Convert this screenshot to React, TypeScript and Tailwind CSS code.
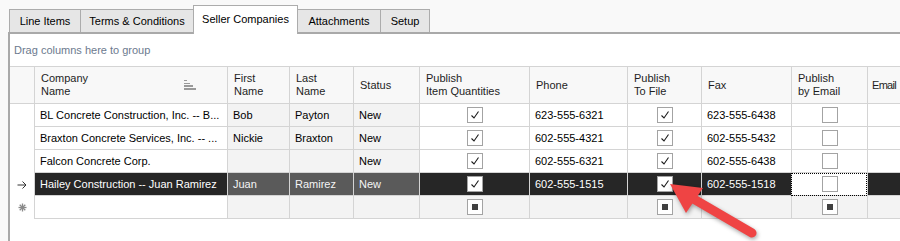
import type { ReactNode } from "react";

type Row = {
  company: string;
  first: string;
  last: string;
  status: string;
  piq: boolean;
  phone: string;
  ptf: boolean;
  fax: string;
  pbe: boolean;
};

// company names are shown as the grid clips them
const rows: Row[] = [
  {
    company: "BL Concrete Construction, Inc. -- B...",
    first: "Bob",
    last: "Payton",
    status: "New",
    piq: true,
    phone: "623-555-6321",
    ptf: true,
    fax: "623-555-6438",
    pbe: false,
  },
  {
    company: "Braxton Concrete Services, Inc. -- ...",
    first: "Nickie",
    last: "Braxton",
    status: "New",
    piq: true,
    phone: "602-555-4321",
    ptf: true,
    fax: "602-555-5432",
    pbe: false,
  },
  {
    company: "Falcon Concrete Corp.",
    first: "",
    last: "",
    status: "New",
    piq: true,
    phone: "602-555-6321",
    ptf: true,
    fax: "602-555-6438",
    pbe: false,
  },
  {
    company: "Hailey Construction -- Juan Ramirez",
    first: "Juan",
    last: "Ramirez",
    status: "New",
    piq: true,
    phone: "602-555-1515",
    ptf: true,
    fax: "602-555-1518",
    pbe: false,
  },
];

const tabs = [
  { label: "Line Items", w: "w-[72px]" },
  { label: "Terms & Conditions", w: "w-[114px]" },
  { label: "Seller Companies", w: "w-[105px]" },
  { label: "Attachments", w: "w-[84px]" },
  { label: "Setup", w: "w-[50px]" },
];

function CheckBox({ state }: { state: "on" | "off" | "mixed" }) {
  return (
    <div className="flex h-[16px] w-[16px] items-center justify-center border border-[#a3a3a3] bg-white">
      {state === "on" && (
        <svg width="14" height="14" viewBox="0 0 14 14">
          <polyline points="3.5,7.5 6,10 10.5,3.5" fill="none" stroke="#1a1a1a" strokeWidth="1.1" />
        </svg>
      )}
      {state === "mixed" && <div className="h-[6px] w-[6px] bg-[#404040]" />}
    </div>
  );
}

function Cell({
  className,
  children,
}: {
  className: string;
  children?: ReactNode;
}) {
  return (
    <div className={`flex h-[23px] min-w-0 shrink-0 items-center overflow-hidden border-b border-l border-[#d4d4d4] ${className}`}>
      {children}
    </div>
  );
}

function SortIcon() {
  return (
    <svg width="13" height="11" viewBox="0 0 13 11" className="shrink-0">
      <rect x="0" y="0" width="3" height="1" fill="#9a9a9a" />
      <rect x="0" y="3" width="6" height="1" fill="#9a9a9a" />
      <rect x="0" y="5" width="9" height="2" fill="#9a9a9a" />
      <rect x="0" y="8" width="12" height="2" fill="#9a9a9a" />
    </svg>
  );
}

function HeaderCell({ className, lines, icon }: { className: string; lines: string[]; icon?: boolean }) {
  return (
    <div className={`flex h-[37px] shrink-0 items-center justify-between overflow-hidden border-b border-l border-[#d4d4d4] bg-[#f8f8f8] leading-[13px] text-[#1e1e1e] ${className}`}>
      <div>
        {lines.map((l) => (
          <div key={l} className="whitespace-nowrap">
            {l}
          </div>
        ))}
      </div>
      {icon && <SortIcon />}
    </div>
  );
}

export default function App() {
  return (
    <div className="relative h-[241px] w-[900px] overflow-hidden bg-[#f9f9f9] text-[11px] text-black [font-family:'Liberation_Sans',Arial,sans-serif]">
      {/* tab strip */}
      <div className="flex h-[32px] items-end pl-[9px]">
        {tabs.map((t, i) => {
          const active = t.label === "Seller Companies";
          return (
            <div
              key={t.label}
              className={
                active
                  ? `relative z-10 -mb-[2px] -ml-px flex h-[29px] items-center justify-center border border-b-0 border-[#acacac] bg-white pb-[2px] ${t.w}`
                  : `flex h-[23px] items-center justify-center border border-b-0 border-[#acacac] bg-[#e6e6e6] ${i === 0 ? "" : "-ml-px"} ${t.w}`
              }
            >
              {t.label}
            </div>
          );
        })}
      </div>

      {/* content panel */}
      <div className="ml-[8px] h-[209px] border-l-2 border-t-2 border-[#a9a9a9] bg-white">
        <div className="flex h-[32px] items-center pl-[4px] text-[#6c7a8e]">Drag columns here to group</div>

        <div className="border-t border-[#d4d4d4]">
          {/* header */}
          <div className="flex">
            <div className="h-[37px] w-[24px] shrink-0 border-b border-[#d4d4d4] bg-[#f8f8f8]" />
            <HeaderCell className="w-[193px] pl-[6px] pr-[30px]" lines={["Company", "Name"]} icon />
            <HeaderCell className="w-[62px] pl-[6px]" lines={["First", "Name"]} />
            <HeaderCell className="w-[64px] pl-[6px]" lines={["Last", "Name"]} />
            <HeaderCell className="w-[66px] pl-[6px]" lines={["Status"]} />
            <HeaderCell className="w-[110px] pl-[6px]" lines={["Publish", "Item Quantities"]} />
            <HeaderCell className="w-[98px] pl-[6px]" lines={["Phone"]} />
            <HeaderCell className="w-[74px] pl-[6px]" lines={["Publish", "To File"]} />
            <HeaderCell className="w-[90px] pl-[6px]" lines={["Fax"]} />
            <HeaderCell className="w-[76px] pl-[6px]" lines={["Publish", "by Email"]} />
            <HeaderCell className="w-[120px] pl-[4px] tracking-[-0.7px]" lines={["Email"]} />
          </div>

          {rows.map((r, i) => {
            const sel = i === 3;
            const dark = sel ? "bg-[#262626] text-white" : "bg-white";
            const ro = sel ? "bg-[#5a5a5a] text-[#f4f4f4]" : "bg-[#f3f3f3]";
            return (
              <div key={r.company} className="flex">
                <div className="flex h-[23px] w-[24px] shrink-0 items-center justify-center bg-white">
                  {sel && (
                    <svg width="10" height="8" viewBox="0 0 10 8">
                      <path d="M0.5 4 H9 M5.5 0.5 L9 4 L5.5 7.5" fill="none" stroke="#333" strokeWidth="1" />
                    </svg>
                  )}
                </div>
                <Cell className={`w-[193px] px-[5px] ${dark}`}>
                  <span className="min-w-0 truncate">{r.company}</span>
                </Cell>
                <Cell className={`w-[62px] px-[5px] ${ro}`}>{r.first}</Cell>
                <Cell className={`w-[64px] px-[5px] ${ro}`}>{r.last}</Cell>
                <Cell className={`w-[66px] px-[5px] ${ro}`}>{r.status}</Cell>
                <Cell className={`w-[110px] justify-center ${dark}`}>
                  <CheckBox state={r.piq ? "on" : "off"} />
                </Cell>
                <Cell className={`w-[98px] px-[5px] ${dark}`}>{r.phone}</Cell>
                <Cell className={`w-[74px] justify-center ${dark}`}>
                  <CheckBox state={r.ptf ? "on" : "off"} />
                </Cell>
                <Cell className={`w-[90px] px-[5px] ${dark}`}>{r.fax}</Cell>
                <Cell
                  className={`w-[76px] justify-center bg-white ${sel ? "outline-1 -outline-offset-1 outline-dotted outline-black" : ""}`}
                >
                  <CheckBox state={r.pbe ? "on" : "off"} />
                </Cell>
                <Cell className={`w-[120px] ${dark}`} />
              </div>
            );
          })}

          {/* new item row */}
          <div className="flex">
            <div className="flex h-[23px] w-[24px] shrink-0 items-center justify-center bg-white">
              <svg width="9" height="9" viewBox="0 0 9 9">
                <g stroke="#8a8a8a" strokeWidth="1.3">
                  <line x1="4.5" y1="0.5" x2="4.5" y2="8.5" />
                  <line x1="0.5" y1="4.5" x2="8.5" y2="4.5" />
                  <line x1="1.7" y1="1.7" x2="7.3" y2="7.3" />
                  <line x1="7.3" y1="1.7" x2="1.7" y2="7.3" />
                </g>
              </svg>
            </div>
            <Cell className="w-[193px] bg-white" />
            <Cell className="w-[62px] bg-[#f3f3f3]" />
            <Cell className="w-[64px] bg-[#f3f3f3]" />
            <Cell className="w-[66px] bg-[#f3f3f3]" />
            <Cell className="w-[110px] justify-center bg-[#f3f3f3]">
              <CheckBox state="mixed" />
            </Cell>
            <Cell className="w-[98px] bg-[#f3f3f3]" />
            <Cell className="w-[74px] justify-center bg-[#f3f3f3]">
              <CheckBox state="mixed" />
            </Cell>
            <Cell className="w-[90px] bg-[#f3f3f3]" />
            <Cell className="w-[76px] justify-center bg-[#f3f3f3]">
              <CheckBox state="mixed" />
            </Cell>
            <Cell className="w-[120px] bg-[#f3f3f3]" />
          </div>
        </div>
      </div>

      {/* red callout arrow */}
      <svg
        className="pointer-events-none absolute left-0 top-0 [filter:drop-shadow(1px_2px_2px_rgba(0,0,0,0.35))]"
        width="900"
        height="241"
        viewBox="0 0 900 241"
      >
        <line x1="752" y1="233" x2="692" y2="198" stroke="#ef4444" strokeWidth="9" strokeLinecap="round" />
        <polygon points="670,184 703,188 686,213" fill="#ef4444" />
      </svg>
    </div>
  );
}
